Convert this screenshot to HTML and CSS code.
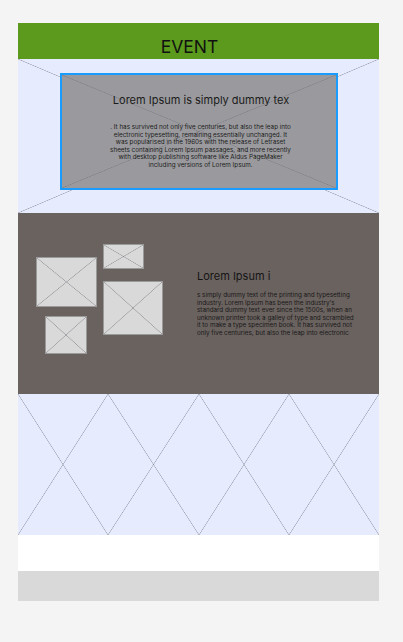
FILE: index.html
```html
<!DOCTYPE html>
<html lang="en">
  <head>
    <meta charset="UTF-8" />
    <meta name="viewport" content="width=device-width, initial-scale=1.0" />
    <title>Event</title>
    <link rel="stylesheet" href="styles.css">
  </head>

  <body>
    <div class="page">
      <header class="banner">EVENT</header>

      <!-- Hero with placeholder cross behind the card -->
      <section class="hero cross">
        <div class="hero-card cross">
          <div class="hero-title">Lorem Ipsum is simply dummy tex</div>
          <p class="hero-text">. It has survived not only five centuries, but also the leap into electronic typesetting, remaining essentially unchanged. It was popularised in the 1960s with the release of Letraset sheets containing Lorem Ipsum passages, and more recently with desktop publishing software like Aldus PageMaker including versions of Lorem Ipsum.</p>
        </div>
      </section>

      <!-- Feature block: photo collage + text -->
      <section class="feature">
        <div class="collage">
          <div class="photo cross photo-a"></div>
          <div class="photo cross photo-b"></div>
          <div class="photo cross photo-c"></div>
          <div class="photo cross photo-d"></div>
        </div>
        <div class="feature-body">
          <div class="feature-title">Lorem Ipsum i</div>
          <p class="feature-text">s simply dummy text of the printing and typesetting industry. Lorem Ipsum has been the industry's standard dummy text ever since the 1500s, when an unknown printer took a galley of type and scrambled it to make a type specimen book. It has survived not only five centuries, but also the leap into electronic</p>
        </div>
      </section>

      <!-- Gallery placeholders -->
      <section class="gallery">
        <div class="cross"></div>
        <div class="cross"></div>
        <div class="cross"></div>
        <div class="cross"></div>
      </section>

      <div class="spacer"></div>
      <footer class="footer"></footer>
    </div>
  </body>
</html>
```

FILE: styles.css
```css
/* General body and layout settings */
body {
  margin: 0;
  background-color: #f4f4f4;
  font-family: Inter, "Noto Sans", sans-serif;
  color: #1e1e1e;
}

.page {
  width: 361px;
  margin: 23px 0 0 18px;
}

/* Placeholder cross drawn with two diagonal gradients */
.cross {
  background-image:
    linear-gradient(to top right, transparent calc(50% - 0.6px), rgba(110, 110, 120, 0.55) 50%, transparent calc(50% + 0.6px)),
    linear-gradient(to bottom right, transparent calc(50% - 0.6px), rgba(110, 110, 120, 0.55) 50%, transparent calc(50% + 0.6px));
}

.banner {
  height: 36px;
  background-color: #5b9a1d;
  display: flex;
  justify-content: center;
  align-items: flex-end;
  padding-right: 18px;
  padding-bottom: 4px;
  box-sizing: border-box;
  font-size: 17.5px;
  line-height: 1;
  color: #111;
}

/* Hero */
.hero {
  height: 154px;
  background-color: #e6ebfd;
  padding: 14px 41px 23px 42px;
  box-sizing: border-box;
}

.hero-card {
  height: 117px;
  border: 2px solid #1a9cff;
  background-color: #9a9a9e;
  box-sizing: border-box;
  display: flex;
  flex-direction: column;
  align-items: center;
  padding-top: 18px;
}

.hero-title {
  font-size: 11px;
  margin-left: 4px;
  color: #1a1a1a;
}

.hero-text {
  width: 187px;
  margin: 17px 0 0 3px;
  font-size: 6.3px;
  line-height: 7.6px;
  text-align: center;
  color: #1a1a1a;
}

/* Feature */
.feature {
  height: 181px;
  background-color: #6a625f;
  display: flex;
  align-items: flex-start;
  padding: 31px 0 0 18px;
  box-sizing: border-box;
}

.collage {
  position: relative;
  width: 127px;
  height: 110px;
  flex-shrink: 0;
}

.photo {
  position: absolute;
  background-color: #d9d9d9;
  border: 1px solid #9a9a9a;
  box-sizing: border-box;
}

.photo-a { left: 0; top: 13px; width: 61px; height: 50px; }
.photo-b { left: 67px; top: 0; width: 41px; height: 25px; }
.photo-c { left: 67px; top: 37px; width: 60px; height: 54px; }
.photo-d { left: 9px; top: 72px; width: 42px; height: 38px; }

.feature-body {
  margin: 25px 0 0 34px;
  width: 161px;
}

.feature-title {
  font-size: 11px;
  color: #151515;
}

.feature-text {
  margin: 9px 0 0;
  font-size: 6.3px;
  line-height: 7.6px;
  color: #181818;
}

/* Gallery */
.gallery {
  height: 141px;
  background-color: #e6ebfd;
  display: grid;
  grid-template-columns: repeat(4, 1fr);
}

.spacer {
  height: 36px;
  background-color: #fff;
}

.footer {
  height: 30px;
  background-color: #d9d9d9;
}
```
